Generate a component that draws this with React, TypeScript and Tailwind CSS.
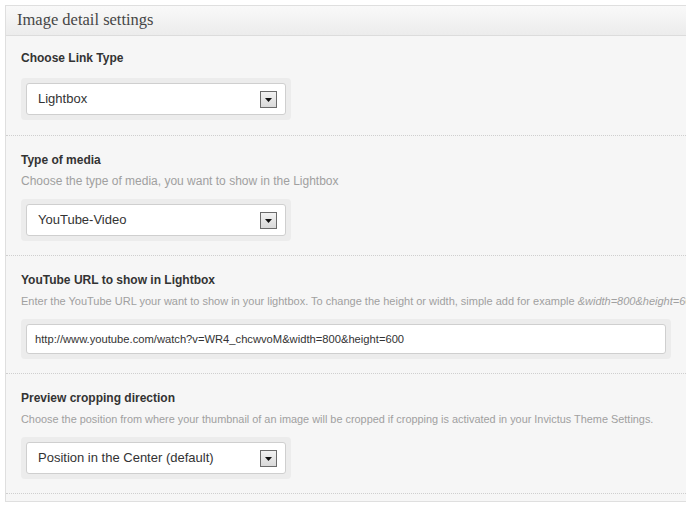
import React from "react";

const sans = "font-['Liberation_Sans',Arial,sans-serif]";

function Arrow() {
  return (
    <span className="flex h-[17px] w-[17px] items-center justify-center border border-[#6b6b6b] bg-gradient-to-b from-[#f2f2f2] to-[#d9d9d9] pt-[2px]">
      <svg width="7" height="4" viewBox="0 0 7 4">
        <path d="M0 0h7L3.5 4z" fill="#111" />
      </svg>
    </span>
  );
}

function SelectBox({ value }: { value: string }) {
  return (
    <div className="w-[270px] rounded-[4px] bg-[#ececec] p-[5px]">
      <div className="flex h-[32px] items-center justify-between rounded-[3px] border border-[#cfcfcf] bg-white pl-[11px] pr-[8px]">
        <span className="text-[13px] text-[#333]">{value}</span>
        <Arrow />
      </div>
    </div>
  );
}

function Section({
  label,
  desc,
  descSize = "text-[10.9px]",
  children,
}: {
  label: string;
  desc?: React.ReactNode;
  descSize?: string;
  children: React.ReactNode;
}) {
  return (
    <div
      className={`border-b border-dotted border-[#cfcfcf] px-[15px] ${desc ? "pt-[16px] pb-[14px]" : "pt-[14px] pb-[15px]"}`}
    >
      <div className="text-[12px] leading-[16px] font-bold text-[#333]">{label}</div>
      {desc && (
        <div className={`mt-[5px] whitespace-nowrap leading-[16px] text-[#a0a0a0] ${descSize}`}>{desc}</div>
      )}
      <div className={desc ? "mt-[10px]" : "mt-[12px]"}>{children}</div>
    </div>
  );
}

export default function App() {
  return (
    <div className={`h-[508px] w-[686px] overflow-hidden bg-white pt-[5px] pl-[5px] ${sans}`}>
      <div className="w-[720px] border border-[#dfdfdf] bg-[#f6f6f6] pb-[7px]">
        <div className="flex h-[30px] items-center border-b border-[#dcdcdc] bg-gradient-to-b from-[#f9f9f9] to-[#ececec] px-[11px]">
          <span className="font-['Liberation_Serif',Georgia,serif] text-[16.5px] text-[#464646]">
            Image detail settings
          </span>
        </div>
        <Section label="Choose Link Type">
          <SelectBox value="Lightbox" />
        </Section>
        <Section
          label="Type of media"
          desc="Choose the type of media, you want to show in the Lightbox"
          descSize="text-[12px]"
        >
          <SelectBox value="YouTube-Video" />
        </Section>
        <Section
          label="YouTube URL to show in Lightbox"
          descSize="text-[11px]"
          desc={
            <>
              Enter the YouTube URL your want to show in your lightbox. To change the height or width, simple add for
              example <i>&amp;width=800&amp;height=600</i>
            </>
          }
        >
          <div className="w-[650px] rounded-[4px] bg-[#ececec] p-[5px]">
            <div className="flex h-[30px] items-center rounded-[3px] border border-[#cfcfcf] bg-white px-[8px] text-[11.2px] text-[#333]">
              http://www.youtube.com/watch?v=WR4_chcwvoM&amp;width=800&amp;height=600
            </div>
          </div>
        </Section>
        <Section
          label="Preview cropping direction"
          desc="Choose the position from where your thumbnail of an image will be cropped if cropping is activated in your Invictus Theme Settings."
        >
          <SelectBox value="Position in the Center (default)" />
        </Section>
      </div>
    </div>
  );
}
